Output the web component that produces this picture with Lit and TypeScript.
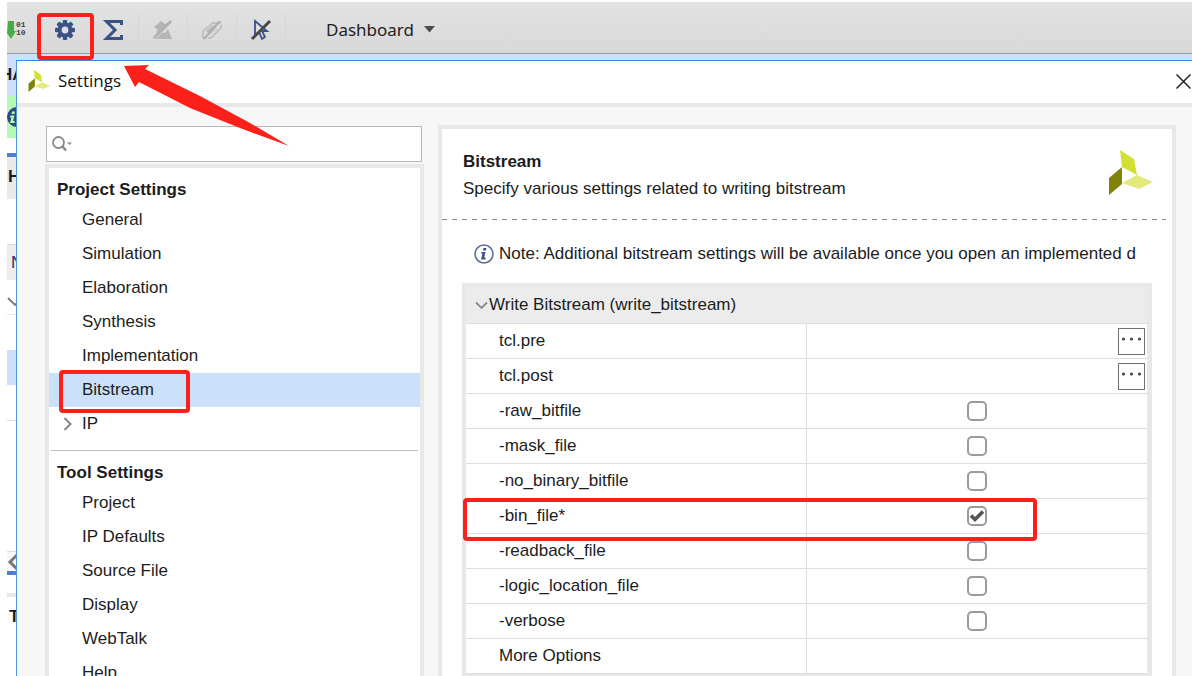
import { LitElement, html, svg, css, nothing } from "lit";
import { customElement, state } from "lit/decorators.js";
import { classMap } from "lit/directives/class-map.js";

const logo = (cls: string) => html`<svg class=${cls} viewBox="0 0 45 45" aria-hidden="true">
  <path d="M12 0 26 9 29 25 14 17z" fill="#d2df33" />
  <path d="M14 17V34L1 45V28z" fill="#7f8408" />
  <path d="M14 33 29 25 45 32 31 39z" fill="#e2ea7c" />
</svg>`;

interface Option { name: string; kind: "path" | "check" | "text"; on?: boolean }

const OPTIONS: Option[] = [
  { name: "tcl.pre", kind: "path" },
  { name: "tcl.post", kind: "path" },
  { name: "-raw_bitfile", kind: "check" },
  { name: "-mask_file", kind: "check" },
  { name: "-no_binary_bitfile", kind: "check" },
  { name: "-bin_file*", kind: "check", on: true },
  { name: "-readback_file", kind: "check" },
  { name: "-logic_location_file", kind: "check" },
  { name: "-verbose", kind: "check" },
  { name: "More Options", kind: "text" },
];

@customElement("tool-bar")
export class ToolBar extends LitElement {
  static styles = css`
    :host { display: block; position: relative; z-index: 1; font: 17px/24px "Noto Sans", sans-serif; color: #222; }
    .bar { display: flex; align-items: center; height: 52px; padding-top: 4px; box-sizing: border-box;
      background: linear-gradient(#e3e3e3, #d8d8d8); border-bottom: 1px solid #9b9b9b; }
    .tool { position: relative; display: flex; justify-content: center; align-items: center; width: 49px; height: 32px;
      margin: 0; padding: 0; border: 0; background: none; box-sizing: border-box; }
    .split { box-shadow: 1px 0 #d6d6d6; }
    .first { width: 33px; justify-content: flex-start; }
    .tool svg { display: block; overflow: visible; }
    .mark { position: absolute; left: -3px; top: -1px; width: 57px; height: 47px; box-sizing: border-box;
      border: 4px solid #fb2019; border-radius: 4px; }
    .menu { display: flex; align-items: center; gap: 10px; margin: 0 0 0 41px; padding: 0; border: 0; background: none;
      font: inherit; color: inherit; }
    .bits { font: bold 8px/8px "Liberation Mono", monospace; }
  `;
  render() {
    return html`<div class="bar" role="toolbar">
      <button class="tool first" aria-label="Program device">
        <svg width="20" height="20" viewBox="0 0 20 20"><path d="M1 1h6v10h2L4 19 0 13z" fill="#45ad45" />
          <text class="bits" x="9" y="7" fill="#444">01</text><text class="bits" x="9" y="15" fill="#444">10</text></svg>
      </button>
      <button class="tool" aria-label="Settings">
        <svg width="20" height="20" viewBox="-10 -10 20 20">
          <g fill="#3b5286">${[0, 45, 90, 135].map((a) => svg`<rect x="-2.2" y="-10" width="4.4" height="20" rx="1" transform="rotate(${a})" />`)}
          <circle r="7.4" /></g><circle r="3.4" fill="#dedede" />
        </svg>
        <span class="mark"></span>
      </button>
      <button class="tool split" aria-label="Report">
        <svg width="20" height="20" viewBox="0 0 20 20"><path d="M17.500 5V1.500H2.500L11 10 2.500 18.500h15V15" fill="none" stroke="#3b5286" stroke-width="3" /></svg>
      </button>
      <button class="tool split" aria-label="Unmark" disabled>
        <svg width="20" height="20" viewBox="0 0 20 20" fill="#b5b5b5"><path d="M1 7 8 1 12 4 15 3 5 14 3 12 5 10z" /><path d="M0 19 8 12 12 13 15 9 19 19z" />
          <path d="M2 19 20 1" stroke="#dedede" stroke-width="1.500" /><path d="M1 18 18 1" stroke="#b0b0b0" stroke-width="2.800" /></svg>
      </button>
      <button class="tool split" aria-label="Unlink" disabled>
        <svg width="20" height="20" viewBox="0 0 20 20" fill="none" stroke="#b9b9b9" stroke-width="1.400"><path d="M1 11 11 3H19V8L9 18H1z" />
          <path d="M6 13 14 7" stroke-width="6" /><path d="M3 20 20 3" stroke="#dedede" stroke-width="1.200" /><path d="M2 19 18 1" stroke="#b0b0b0" stroke-width="2.200" /></svg>
      </button>
      <button class="tool split" aria-label="Deselect">
        <svg width="20" height="20" viewBox="0 0 20 20" fill="none"><path d="M4 1V15L8 12 11 19 14 17 11 11H16z" stroke="#3b5286" stroke-width="1.800" />
          <path d="M1 19 19 1" stroke="#484848" stroke-width="3" /></svg>
      </button>
      <button class="menu">Dashboard<svg width="11" height="7" viewBox="0 0 11 7"><path d="M0 0h11L5.500 6.500z" fill="#4c4c4c" /></svg></button>
    </div>`;
  }
}

@customElement("settings-nav")
export class SettingsNav extends LitElement {
  static styles = css`
    :host { display: flex; flex-direction: column; width: 379px; flex: none; font-size: 17px; line-height: 20px; }
    .search { flex: none; display: flex; align-items: center; gap: 4px; height: 36px; margin: 1px 2px 2px 1px; padding: 0 5px; box-sizing: border-box;
      border: 1px solid #b8b8b8; background: #fff; }
    .search svg { flex: none; }
    .search input { flex: 1; min-width: 0; border: 0; outline: 0; background: none; font: inherit; }
    .tree { flex: 1; padding: 9px 0 0; border: 4px solid #e8e8e8; border-bottom: 0; background: #fff; }
    .head { margin: 0; padding: 3px 8px; font-size: 17px; line-height: 20px; font-weight: bold; }
    .list { margin: 0; padding: 0; list-style: none; }
    .item { position: relative; display: flex; align-items: center; height: 34px; padding-left: 33px; color: #1c1c1c; text-decoration: none; }
    .branch { padding-left: 14px; gap: 10px; }
    .selected { background: #cbe0fb; }
    .mark { position: absolute; left: 10px; top: -3px; width: 131px; height: 43px; box-sizing: border-box; z-index: 1;
      border: 4px solid #fb2019; border-radius: 4px; }
    .rule { height: 1px; margin: 9px 2px; border: 0; background: #bdbdbd; }
  `;
  @state() private current = "Bitstream";

  private item(name: string) {
    const branch = name === "IP";
    const on = name === this.current;
    return html`<li><a href="#" class=${classMap({ item: true, branch, selected: on })}
      @click=${(e: Event) => { e.preventDefault(); this.current = name; }}>
      ${branch ? html`<svg width="9" height="14" viewBox="0 0 9 14"><path d="M1.500 1 7.500 7 1.500 13" fill="none" stroke="#858585" stroke-width="2" /></svg>` : nothing}
      ${name}${name === "Bitstream" ? html`<span class="mark"></span>` : nothing}</a></li>`;
  }
  render() {
    return html`
      <label class="search">
        <svg width="20" height="16" viewBox="0 0 20 16" fill="none" stroke="#8a8a8a"><circle cx="6.500" cy="6.500" r="5.500" stroke-width="1.800" />
          <path d="M10 10 14 14.500" stroke-width="2.500" /><path d="M15 6.500h5L17.500 9z" fill="#8a8a8a" stroke="none" /></svg>
        <input type="text" aria-label="Search settings" />
      </label>
      <nav class="tree">
        <h2 class="head">Project Settings</h2>
        <ul class="list">${["General", "Simulation", "Elaboration", "Synthesis", "Implementation", "Bitstream", "IP"].map((n) => this.item(n))}</ul>
        <hr class="rule" />
        <h2 class="head">Tool Settings</h2>
        <ul class="list">${["Project", "IP Defaults", "Source File", "Display", "WebTalk", "Help"].map((n) => this.item(n))}</ul>
      </nav>`;
  }
}

@customElement("bitstream-panel")
export class BitstreamPanel extends LitElement {
  static styles = css`
    :host { display: block; flex: 1; min-width: 0; border: 4px solid #e8e8e8; border-bottom: 0; background: #fff; font-size: 17px; line-height: 20px; }
    .top { display: flex; justify-content: space-between; height: 90px; padding: 21px 19px 0 21px; box-sizing: border-box; }
    .title { margin: 2px 0 7px; font-size: 17px; line-height: 20px; }
    .about { margin: 0; }
    .logo { width: 45px; height: 45px; }
    .dash { height: 1px; margin-right: 6px; background: repeating-linear-gradient(90deg, #8c8c8c 0 5px, #fff 5px 10px); }
    .body { padding: 24px 20px 0 20px; }
    .note { display: flex; align-items: center; gap: 5px; margin: 0 0 19px; padding-left: 12px; white-space: nowrap; overflow: hidden; }
    .note svg { flex: none; }
    .frame { border: 4px solid #e8e8e8; border-right-width: 5px; }
    .grid { width: 100%; border-collapse: separate; border-spacing: 0; table-layout: fixed; }
    .grid th, .grid td { height: 35px; padding: 0; box-sizing: border-box; border-bottom: 1px solid #dedede; font-weight: normal; text-align: left; }
    .grid .group { height: 37px; background: #ececec; }
    .toggle { display: flex; align-items: center; gap: 1px; margin: 0; padding: 0 0 0 9px; border: 0; background: none; font: inherit; color: inherit; }
    .grid .name { position: relative; padding-left: 33px; border-right: 1px solid #dedede; }
    .value { display: flex; justify-content: center; align-items: center; }
    .path { justify-content: flex-end; padding-right: 2px; }
    .more { display: flex; align-items: center; justify-content: center; width: 27px; height: 27px; padding: 0 0 4px; border: 1px solid #707070; background: #fff; }
    .box { appearance: none; width: 20px; height: 20px; margin: 0; border: 2px solid #9b9b9b; border-radius: 5px; background: #fff; display: grid; place-items: center; }
    .tick { display: grid; place-items: center; }
    .tick > * { grid-area: 1 / 1; }
    .tick svg { pointer-events: none; }
    .mark { position: absolute; left: -3px; top: -1px; width: 169%; height: 43px; box-sizing: border-box; z-index: 1;
      border: 4px solid #fb2019; border-radius: 4px; pointer-events: none; }
  `;
  @state() private options = OPTIONS;

  private value(o: Option, i: number) {
    if (o.kind === "path")
      return html`<div class="value path"><button class="more" id="opt${i}" aria-label="Browse ${o.name}">
        <svg width="21" height="4" viewBox="0 0 21 4" fill="#444"><circle cx="2.500" cy="2" r="1.600" /><circle cx="10.500" cy="2" r="1.600" /><circle cx="18.500" cy="2" r="1.600" /></svg></button></div>`;
    if (o.kind === "check")
      return html`<div class="value"><span class="tick">
        <input class="box" type="checkbox" id="opt${i}" .checked=${!!o.on}
          @change=${() => { this.options = this.options.map((p, j) => (j === i ? { ...p, on: !p.on } : p)); }} />
        ${o.on ? html`<svg width="16" height="14" viewBox="0 0 16 14"><path d="M2 6.500 6 10.500 14 2.500" fill="none" stroke="#555" stroke-width="3.600" /></svg>` : nothing}
      </span></div>`;
    return nothing;
  }
  render() {
    return html`
      <header class="top"><div><h1 class="title">Bitstream</h1><p class="about">Specify various settings related to writing bitstream</p></div>${logo("logo")}</header>
      <div class="dash"></div>
      <div class="body">
        <p class="note"><svg width="20" height="20" viewBox="0 0 20 20"><circle cx="10" cy="10" r="9" fill="none" stroke="#5b6f9c" stroke-width="1.600" />
          <path d="M9.500 4h3l-.6 2.600h-3zM7.500 8h4L10.200 13.500h1.600l-.5 2H7l1.500-6H7z" fill="#3b5286" /></svg><span>Note: Additional bitstream settings will be available once you open an implemented d</span></p>
        <div class="frame"><table class="grid">
          <thead><tr><th class="group" colspan="2"><button class="toggle"><svg width="13" height="9" viewBox="0 0 13 9"><path d="M1 1.500 6.500 7 12 1.500" fill="none" stroke="#8a8a8a" stroke-width="1.800" /></svg>Write Bitstream (write_bitstream)</button></th></tr></thead>
          <tbody>${this.options.map((o, i) => html`<tr>
            <th class="name" scope="row">${o.kind === "text" ? o.name : html`<label for="opt${i}">${o.name}</label>`}${o.name === "-bin_file*" ? html`<span class="mark"></span>` : nothing}</th>
            <td>${this.value(o, i)}</td></tr>`)}</tbody>
        </table></div>
      </div>`;
  }
}

@customElement("app-root")
export class AppRoot extends LitElement {
  static styles = css`
    :host { position: relative; display: flex; flex-direction: column; height: 100vh; padding: 2px 0 0 7px; box-sizing: border-box; overflow: hidden;
      background: #fff; color: #1c1c1c; font-family: "Liberation Sans", Arial, sans-serif; }
    .desk { flex: 1; min-height: 0; display: flex; background: #cbe0fb; }
    .behind { flex: none; width: 9px; overflow: hidden; background: #fff; font-weight: bold; font-size: 17px; line-height: 20px; white-space: nowrap; }
    .strip { box-sizing: border-box; overflow: hidden; }
    .project { height: 42px; padding-top: 11px; background: #cbe0fb; text-indent: -7px; }
    .info { height: 42px; padding-top: 11px; background: #b2fbb4; }
    .tab { height: 46px; margin-top: 15px; padding: 10px 0 0 1px; border-top: 4px solid #527ed0; background: #e9e9e9; }
    .col { height: 36px; margin-top: 45px; padding: 8px 0 0 4px; border-top: 1px solid #ddd; background: #ececec; font-weight: normal; color: #24336b; }
    .node { height: 35px; padding-top: 12px; border-bottom: 1px solid #e6e6e6; }
    .gap { height: 35px; }
    .chosen { height: 35px; background: #cbe0fb; }
    .rest { height: 36px; border-bottom: 1px solid #ddd; }
    .scroll { height: 24px; margin-top: 130px; border-top: 1px solid #ddd; border-bottom: 4px solid #527ed0; background: #f7f7f7; }
    .foot { height: 60px; margin-top: 18px; padding: 10px 0 0 2px; border-top: 4px solid #e6e6e6; }
    .dialog { flex: 1; min-width: 0; display: flex; flex-direction: column; margin-top: 6px; border-top: 1px solid #3f87dc; border-left: 1px solid #4c93e0; background: #f7f7f7; }
    .caption { flex: none; display: flex; align-items: center; gap: 8px; height: 46px; padding: 0 1px 2px 11px; box-sizing: border-box; border-bottom: 4px solid #e8e8e8;
      background: #fff; color: #111; font: 17px/24px "Open Sans", "Noto Sans", sans-serif; }
    .logo { width: 22px; height: 22px; }
    .name { flex: 1; }
    .close { display: flex; margin: 0; padding: 0; border: 0; background: none; }
    .content { flex: 1; min-height: 0; display: flex; gap: 14px; padding: 18px 16px 0 28px; }
    .arrow { position: absolute; left: 120px; top: 60px; width: 172px; height: 90px; z-index: 2; pointer-events: none; }
  `;
  render() {
    return html`
      <tool-bar></tool-bar>
      <div class="desk">
        <div class="behind" aria-hidden="true">
          <div class="strip project">HA</div>
          <div class="strip info"><svg width="20" height="20" viewBox="0 0 20 20"><circle cx="10" cy="10" r="10" fill="#2f4a80" /><path d="M5 4.500h3L7.400 7H4.500zM3.500 8.500h4L6 14h2l-.5 2H3l1.500-5.500H3z" fill="#b2fbb4" /></svg></div>
          <div class="strip tab">H</div>
          <div class="strip col">N</div>
          <div class="strip node"><svg width="14" height="10" viewBox="0 0 14 10"><path d="M1 1 8 8 14 1" fill="none" stroke="#777" stroke-width="1.800" /></svg></div>
          <div class="gap"></div><div class="chosen"></div><div class="strip rest"></div>
          <div class="strip scroll"><svg width="12" height="18" viewBox="0 0 12 18"><path d="M10 3 3 10 10 17" fill="none" stroke="#777" stroke-width="3" /></svg></div>
          <div class="strip foot">T</div>
        </div>
        <section class="dialog" role="dialog" aria-label="Settings">
          <header class="caption">${logo("logo")}<span class="name">Settings</span>
            <button class="close" aria-label="Close"><svg width="15" height="15" viewBox="0 0 15 15"><path d="M.5 .5 14.500 14.500M14.500 .5 .5 14.500" stroke="#222" stroke-width="1.500" /></svg></button></header>
          <div class="content"><settings-nav></settings-nav><bitstream-panel></bitstream-panel></div>
        </section>
      </div>
      <svg class="arrow" viewBox="120 60 172 90" aria-hidden="true"><path d="M124 66 149 65 145 69 200 96 250 123 289 146 240 128 190 108 139 82 135 87z" fill="#fb2019" /></svg>`;
  }
}
